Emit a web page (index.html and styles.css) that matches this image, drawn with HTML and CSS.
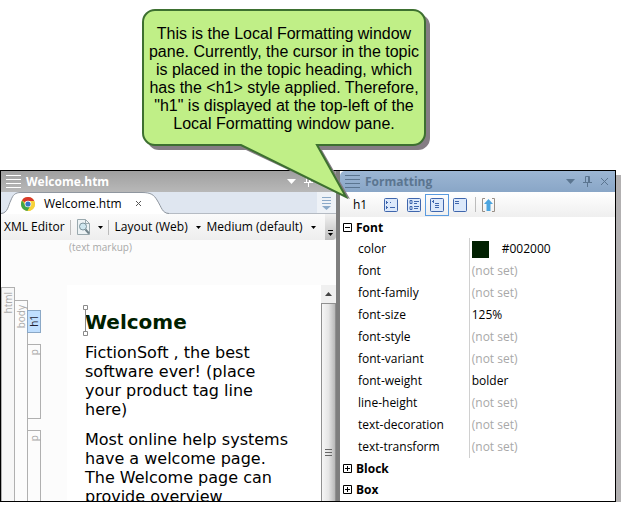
FILE: index.html
```html
<!DOCTYPE html>
<html lang="en">
<head>
<meta charset="utf-8">
<title>Welcome.htm</title>
<link rel="stylesheet" href="styles.css">
</head>
<body>
<aside class="callout">
  <svg class="callout-shape" width="292" height="194" viewBox="0 0 292 194" aria-hidden="true">
    <path class="callout-shadow" d="M17 5H276a12 12 0 0 1 12 12V129a12 12 0 0 1-12 12H180L208 190 104 141H17a12 12 0 0 1-12-12V17a12 12 0 0 1 12-12Z"/>
    <path class="callout-fill" d="M13 1H271a12 12 0 0 1 12 12V124a12 12 0 0 1-12 12H175L204 188 99 136H13a12 12 0 0 1-12-12V13a12 12 0 0 1 12-12Z"/>
  </svg>
  <p class="callout-text">This is the Local Formatting window<br>pane. Currently, the cursor in the topic<br>is placed in the topic heading, which<br>has the &lt;h1&gt; style applied. Therefore,<br>"h1" is displayed at the top-left of the<br>Local Formatting window pane.</p>
</aside>
<main class="window">
  <section class="editor">
    <header class="titlebar titlebar-gray">
      <svg class="grip" width="15" height="13" viewBox="0 0 15 13"><path d="M0 .5h15M0 4.500h15M0 8.500h15M0 12.500h15"/></svg>
      <h2 class="title">Welcome.htm</h2>
      <button class="title-btn" aria-label="Window menu"><svg width="9" height="5"><path class="solid" d="M0 0h9L4.500 5Z"/></svg></button>
      <button class="title-btn" aria-label="Pin"><svg width="9" height="11" viewBox="0 0 9 11"><path d="M2.500 6V.5h4V6M5.500 1v5M0 6.500h9M4.500 7v4"/></svg></button>
      <button class="title-btn" aria-label="Close"><svg width="9" height="9"><path d="M1 1l7 7M8 1l-7 7"/></svg></button>
    </header>
    <div class="tabstrip">
      <div class="tab">
        <svg width="20" height="22" viewBox="0 0 20 22"><path class="tab-fill" d="M0 22C7 21 7 14 10 8 12 3 14 .5 20 .5V22Z"/><path class="tab-line" d="M0 21.500C7 21 7 14 10 8 12 3 14 .5 20 .5"/></svg>
        <div class="tab-body">
          <svg width="14" height="14" viewBox="0 0 14 14"><circle cx="7" cy="7" r="7" fill="#e9c52f"/><path d="M7 7 1 3.400A7 7 0 0 1 13.200 4H7Z" fill="#d9382b"/><path d="M1 3.400A7 7 0 0 0 6.500 14L9.500 8.500 4.500 8.500Z" fill="#3fa548"/><path d="M7 4H13.200A7 7 0 0 1 6.500 14L9.800 8.400Z" fill="#f7d23a"/><circle cx="7" cy="7" r="3.300" fill="#fff"/><circle cx="7" cy="7" r="2.600" fill="#3775c5"/></svg>
          <span>Welcome.htm</span>
          <button class="tab-close" aria-label="Close tab"><svg width="7" height="7"><path d="M1 1l5 5M6 1l-5 5" stroke="#555"/></svg></button>
        </div>
        <svg width="27" height="22" viewBox="0 0 27 22"><path class="tab-fill" d="M27 22C20 21 20 16 15 8 12 3 9 .5 0 .5V22Z"/><path class="tab-line" d="M27 21.500C20 21 20 16 15 8 12 3 9 .5 0 .5"/></svg>
      </div>
      <button class="tab-list" aria-label="Open files"><svg width="9" height="13" viewBox="0 0 9 13"><path d="M0 .5h9M0 3.500h9M0 6.500h9" stroke="#8ba9c8"/><path d="M0 9h9L4.500 13Z" fill="#8ba9c8"/></svg></button>
    </div>
    <div class="toolbar">
      <button class="tool-text">XML Editor</button>
      <span class="sep"></span>
      <button class="tool-preview" aria-label="Preview">
        <svg width="13" height="16" viewBox="0 0 13 16"><path d="M.5.500H8.500L12.500 4.500V15.500H.5Z" fill="#edf3f5" stroke="#9aa9ae"/><path d="M8.500.500V4.500H12.500" fill="none" stroke="#9aa9ae"/><circle cx="6" cy="7.500" r="3.500" fill="#cfe7ef" stroke="#7b929b"/><path d="M8.500 10.500 12 14.500" stroke="#72848b" stroke-width="2"/></svg>
        <svg width="5" height="3"><path d="M0 0h5L2.500 3Z"/></svg>
      </button>
      <span class="sep"></span>
      <label class="drop"><select aria-label="Layout"><option>Layout (Web)</option></select><svg width="5" height="3"><path d="M0 0h5L2.500 3Z"/></svg></label>
      <label class="drop"><select aria-label="Medium"><option>Medium (default)</option></select><svg width="5" height="3"><path d="M0 0h5L2.500 3Z"/></svg></label>
      <button class="overflow" aria-label="More"><svg width="5" height="6"><path d="M0 .5h5" stroke="#000"/><path d="M0 3h5L2.500 6Z"/></svg></button>
    </div>
    <div class="canvas">
      <p class="hint">(text markup)</p>
      <div class="work">
        <div class="bars">
          <div class="bar bar-html"><span>html</span></div>
          <div class="bar bar-body"><span>body</span></div>
          <div class="blocks">
            <div class="bar bar-h1"><span>h1</span></div>
            <div class="bar bar-p"><span>p</span></div>
            <div class="bar bar-rest"><span>p</span></div>
          </div>
        </div>
        <article class="page">
          <h1>Welcome<svg class="caret" width="5" height="31" viewBox="0 0 5 31"><path d="M2.500 4v22" /><path d="M.5.500h4v4h-4ZM.5 26.500h4v4h-4Z" fill="#fff"/></svg></h1>
          <p>FictionSoft , the best<br>software ever! (place<br>your product tag line<br>here)</p>
          <p>Most online help systems<br>have a welcome page.<br>The Welcome page can<br>provide overview</p>
        </article>
        <div class="scroll">
          <div class="scroll-up"><svg width="7" height="4"><path d="M0 4h7L3.500 0Z" fill="#444"/></svg></div>
          <div class="thumb"><svg width="7" height="8" viewBox="0 0 7 8"><path d="M0 .5h7M0 3.500h7M0 6.500h7" stroke="#666"/></svg></div>
        </div>
      </div>
    </div>
  </section>
  <section class="formatting">
    <header class="titlebar titlebar-blue">
      <svg class="grip" width="15" height="13" viewBox="0 0 15 13"><path d="M0 .5h15M0 4.500h15M0 8.500h15M0 12.500h15"/></svg>
      <h2 class="title">Formatting</h2>
      <button class="title-btn" aria-label="Window menu"><svg width="9" height="5"><path class="solid" d="M0 0h9L4.500 5Z"/></svg></button>
      <button class="title-btn" aria-label="Pin"><svg width="9" height="11" viewBox="0 0 9 11"><path d="M2.500 6V.5h4V6M5.500 1v5M0 6.500h9M4.500 7v4"/></svg></button>
      <button class="title-btn" aria-label="Close"><svg width="9" height="9"><path d="M1 1l7 7M8 1l-7 7"/></svg></button>
    </header>
    <div class="format-tools">
      <span class="tag">h1</span>
      <button class="view" aria-label="Show all properties"><svg width="14" height="14" viewBox="0 0 14 14"><rect x=".5" y=".5" width="13" height="13" rx="1"/><path d="M2 4.500h2M6 4.500h1M2 9.500h2M6 9.500h5M2.500 3v3M2.500 8v3"/></svg></button>
      <button class="view" aria-label="Show by group"><svg width="14" height="14" viewBox="0 0 14 14"><rect x=".5" y=".5" width="13" height="13" rx="1"/><path d="M3 2.500h2v3H3ZM3 8.500h2v3H3ZM7 3.500h5M7 5.500h3M7 8.500h5M7 10.500h4"/></svg></button>
      <button class="view view-on" aria-label="Show grouped list"><svg width="14" height="14" viewBox="0 0 14 14"><rect x=".5" y=".5" width="13" height="13" rx="1"/><path d="M2 3.500h2M3.500 2v3M5 5.500h4M5 7.500h4M5 9.500h4"/></svg></button>
      <button class="view" aria-label="Show set properties"><svg width="14" height="14" viewBox="0 0 14 14"><rect x=".5" y=".5" width="13" height="13" rx="1"/><path d="M2 3.500h4M2 5.500h4"/></svg></button>
      <span class="sep"></span>
      <button class="export" aria-label="Create style"><svg width="13" height="14" viewBox="0 0 13 14"><path d="M3 .5H.5v13H3M10 .5h2.500v13H10" fill="none" stroke="#988f87"/><path d="M6.500 1 11 6H8.500v7h-4V6H2Z" fill="#4ca5df"/></svg></button>
    </div>
    <button class="group" aria-expanded="true"><svg width="9" height="9"><path d="M.5.500h8v8h-8ZM2 4.500h5"/></svg>Font</button>
    <table class="props">
      <tr><th scope="row">color</th><td><span class="color"><i class="swatch"></i>#002000</span></td></tr>
      <tr><th scope="row">font</th><td class="unset">(not set)</td></tr>
      <tr><th scope="row">font-family</th><td class="unset">(not set)</td></tr>
      <tr><th scope="row">font-size</th><td>125%</td></tr>
      <tr><th scope="row">font-style</th><td class="unset">(not set)</td></tr>
      <tr><th scope="row">font-variant</th><td class="unset">(not set)</td></tr>
      <tr><th scope="row">font-weight</th><td>bolder</td></tr>
      <tr><th scope="row">line-height</th><td class="unset">(not set)</td></tr>
      <tr><th scope="row">text-decoration</th><td class="unset">(not set)</td></tr>
      <tr><th scope="row">text-transform</th><td class="unset">(not set)</td></tr>
    </table>
    <button class="group" aria-expanded="false"><svg width="9" height="9"><path d="M.5.500h8v8h-8ZM2 4.500h5M4.500 2v5"/></svg>Block</button>
    <button class="group" aria-expanded="false"><svg width="9" height="9"><path d="M.5.500h8v8h-8ZM2 4.500h5M4.500 2v5"/></svg>Box</button>
  </section>
</main>
</body>
</html>
```
FILE: styles.css
```css
* { box-sizing: border-box; }
body {
  margin: 0;
  padding: 9px 5px 0 0;
  background: #fff;
  color: #000;
  font: 12px/16px "Open Sans", "Noto Sans", sans-serif;
}
h1, h2, p { margin: 0; }
svg { display: block; flex: none; }
button, select {
  margin: 0;
  padding: 0;
  border: 0;
  background: none;
  color: inherit;
  font: inherit;
  appearance: none;
}

.callout {
  position: relative;
  z-index: 1;
  width: 284px;
  margin-left: 142px;
  padding: 16px 0 37px;
}
.callout-shape { position: absolute; top: 0; left: 0; }
.callout-shadow { fill: #857d84; }
.callout-fill { fill: #c0ef87; stroke: #3d7030; stroke-width: 2; }
.callout-text {
  position: relative;
  font: 16px/18px "Liberation Sans", Arial, sans-serif;
  text-align: center;
  white-space: nowrap;
}

.window {
  display: grid;
  grid-template-columns: 339fr 275fr;
  border: 1px solid #000;
  box-shadow: 5px 5px 0 #b2b0b1;
  background: #fff;
}
.editor {
  display: flex;
  flex-direction: column;
  min-width: 0;
  border-right: 4px solid #7e7e7e;
}
.formatting { min-width: 0; padding-bottom: 1px; }

.titlebar {
  display: flex;
  align-items: center;
  height: 21px;
  padding: 0 6px 0 5px;
}
.titlebar-gray { background: linear-gradient(#a0a0a0, #b8b8b8); color: #fff; }
.titlebar-blue { background: linear-gradient(#9cb6d3, #89a6c7); color: #5b7590; border-radius: 5px 0 0 0; }
.titlebar svg { fill: none; stroke: currentColor; }
.titlebar .solid { fill: currentColor; stroke: none; }
.title { flex: 1; margin-left: 5px; font-size: 12px; line-height: 16px; }
.title-btn { margin-left: 8px; }

.tabstrip {
  display: flex;
  justify-content: space-between;
  height: 22px;
  background: #dfe6f0;
  border-bottom: 1px solid #b5bbc3;
}
.tab { display: flex; height: 22px; }
.tab-body {
  display: flex;
  align-items: center;
  gap: 9px;
  border-top: 1px solid #8f969f;
  background: #fff;
}
.tab-fill { fill: #fff; }
.tab-line { fill: none; stroke: #8f969f; }
.tab-close { margin-left: 4px; }
.tab-list { padding: 2px 5px 0; background: #eef2f7; }

.toolbar {
  display: flex;
  align-items: center;
  height: 26px;
  padding-left: 3px;
  background: linear-gradient(#fbfbfb, #eee);
  white-space: nowrap;
}
.sep { width: 1px; height: 15px; background: #bcbcbc; }
.toolbar .sep { margin: 0 6px 0 5px; }
.tool-preview { display: flex; align-items: center; gap: 8px; }
.drop { display: flex; align-items: center; gap: 7px; margin-right: 6px; }
.overflow {
  align-self: stretch;
  display: flex;
  align-items: flex-end;
  margin-left: auto;
  padding: 0 3px 4px;
  background: linear-gradient(#f1f1f1, #bdbdbd);
  border-radius: 0 0 4px 0;
}

.canvas {
  contain: size;
  display: flex;
  flex: 1;
  flex-direction: column;
  overflow: hidden;
  background: #fcfcfc;
}
.hint {
  height: 45px;
  padding-left: 68px;
  color: #a9a9a9;
  font-size: 10px;
  line-height: 14px;
}
.work { display: flex; flex: 1; min-height: 0; }
.bars { display: flex; width: 66px; color: #aaa; font-size: 10px; }
.bar { width: 14px; border: 1px solid #b0b0b0; padding-top: 4px; }
.bar span {
  display: block;
  line-height: 12px;
  writing-mode: vertical-rl;
  transform: rotate(180deg);
}
.bar-html { margin-top: 2px; border-bottom: 0; background: #f7f7f7; }
.bar-body { margin: 15px 0 0 -1px; border-bottom: 0; }
.blocks { display: flex; flex-direction: column; margin: 25px 0 0 -1px; }
.bar-h1 { height: 23px; background: #c0dfff; border-color: #8ba8c6; color: #223; }
.bar-p { height: 75px; margin: 11px 0; }
.bar-rest { flex: 1; border-bottom: 0; }

.page {
  flex: 1;
  padding: 25px 0 0 18px;
  background: #fff;
  font: 16px/19px "DejaVu Sans", Verdana, sans-serif;
  white-space: nowrap;
}
.page h1 {
  position: relative;
  margin-bottom: 8px;
  color: #002000;
  font-size: 20px;
  line-height: 25px;
}
.caret { position: absolute; top: -5px; left: -2px; fill: none; stroke: #8a8a8a; }
.page p { margin-bottom: 11px; }

.scroll { display: flex; flex-direction: column; width: 15px; background: #f0f0f0; }
.scroll-up { display: grid; place-items: center; height: 18px; }
.thumb {
  display: grid;
  flex: 1;
  place-items: end center;
  padding-bottom: 44px;
  border: 1px solid #909090;
  border-bottom: 0;
  background: linear-gradient(90deg, #f6f6f6, #e6e6e6 50%, #b8b8b8);
}

.format-tools {
  display: flex;
  align-items: center;
  height: 25px;
  padding-left: 13px;
  background: linear-gradient(#fff, #efefef);
}
.tag { width: 26px; }
.view { margin-right: -1px; padding: 3px 4px; border: 1px solid transparent; }
.view svg { fill: #dce9fb; stroke: #3f66ad; }
.view-on { border-color: #5a9be0; }
.format-tools .sep { margin: 0 6px 0 4px; }

.group {
  display: flex;
  align-items: center;
  gap: 4px;
  width: 100%;
  height: 21px;
  padding-left: 3px;
  font-weight: 700;
}
.group svg { fill: none; stroke: #000; }
.props { width: 100%; border-collapse: collapse; table-layout: fixed; }
.props tr { height: 22px; }
.props th {
  width: 47%;
  padding: 0 0 0 18px;
  border-right: 1px solid #d0d0d0;
  font-weight: 400;
  text-align: left;
}
.props td { padding: 0 0 0 2px; }
.props .unset { color: #a8a8a8; }
.color { display: flex; align-items: center; gap: 13px; }
.swatch { width: 17px; height: 17px; background: #002000; }
```
